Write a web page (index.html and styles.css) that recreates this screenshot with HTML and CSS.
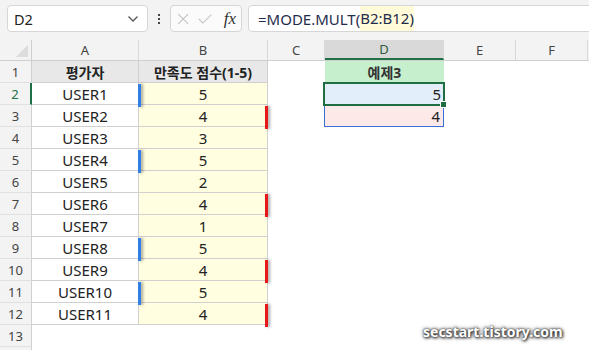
FILE: index.html
```html
<!DOCTYPE html>
<html lang="ko">

<head>
    <meta charset="UTF-8">
    <meta name="viewport" content="width=device-width, initial-scale=1.0">
    <title>MODE.MULT</title>
    <link rel="stylesheet" href="styles.css">
</head>

<body>
    <div class="app">
        <div class="toolbar">
            <div class="namebox">
                <span>D2</span>
                <svg class="namebox__arrow" width="12" height="8" viewBox="0 0 12 8">
                    <path d="M1.5 1.5 L6 6 L10.5 1.5" fill="none" stroke="#555" stroke-width="1.3" />
                </svg>
            </div>
            <div class="toolbar__dots">
                <span></span><span></span><span></span>
            </div>
            <div class="fxbox">
                <svg width="14" height="14" viewBox="0 0 14 14">
                    <path d="M1.5 1.5 L12.5 12.5 M12.5 1.5 L1.5 12.5" stroke="#c2c2c2" stroke-width="1.2" />
                </svg>
                <svg width="16" height="14" viewBox="0 0 16 14">
                    <path d="M1 7 L5.5 11.5 L15 2" fill="none" stroke="#c2c2c2" stroke-width="1.2" />
                </svg>
                <span class="fxbox__fx">fx</span>
            </div>
            <div class="formula">
                <span>=MODE.MULT(</span><span class="formula__ref">B2:B12)</span>
            </div>
        </div>

        <div class="sheet">
            <div class="row row--head">
                <div class="corner"><span class="corner__tri"></span></div>
                <div class="colhead">A</div>
                <div class="colhead">B</div>
                <div class="colhead">C</div>
                <div class="colhead colhead--active">D</div>
                <div class="colhead">E</div>
                <div class="colhead">F</div>
                <div class="colhead colhead--last"></div>
            </div>

            <div class="row">
                <div class="rowhead">1</div>
                <div class="cell cell--title">평가자</div>
                <div class="cell cell--title">만족도 점수(1-5)</div>
                <div class="blank"></div>
                <div class="dcell dcell--title">예제3</div>
                <div class="blank"></div><div class="blank"></div><div class="blank"></div>
            </div>

            <div class="row">
                <div class="rowhead rowhead--active">2</div>
                <div class="cell">USER1</div>
                <div class="cell cell--score"><span class="mark mark--blue"></span>5</div>
                <div class="blank"></div>
                <div class="dcell dcell--sel">5<span class="handle"></span></div>
                <div class="blank"></div><div class="blank"></div><div class="blank"></div>
            </div>

            <div class="row">
                <div class="rowhead">3</div>
                <div class="cell">USER2</div>
                <div class="cell cell--score">4<span class="mark mark--red"></span></div>
                <div class="blank"></div>
                <div class="dcell dcell--spill">4</div>
                <div class="blank"></div><div class="blank"></div><div class="blank"></div>
            </div>

            <div class="row">
                <div class="rowhead">4</div>
                <div class="cell">USER3</div>
                <div class="cell cell--score">3</div>
            </div>

            <div class="row">
                <div class="rowhead">5</div>
                <div class="cell">USER4</div>
                <div class="cell cell--score"><span class="mark mark--blue"></span>5</div>
            </div>

            <div class="row">
                <div class="rowhead">6</div>
                <div class="cell">USER5</div>
                <div class="cell cell--score">2</div>
            </div>

            <div class="row">
                <div class="rowhead">7</div>
                <div class="cell">USER6</div>
                <div class="cell cell--score">4<span class="mark mark--red"></span></div>
            </div>

            <div class="row">
                <div class="rowhead">8</div>
                <div class="cell">USER7</div>
                <div class="cell cell--score">1</div>
            </div>

            <div class="row">
                <div class="rowhead">9</div>
                <div class="cell">USER8</div>
                <div class="cell cell--score"><span class="mark mark--blue"></span>5</div>
            </div>

            <div class="row">
                <div class="rowhead">10</div>
                <div class="cell">USER9</div>
                <div class="cell cell--score">4<span class="mark mark--red"></span></div>
            </div>

            <div class="row">
                <div class="rowhead">11</div>
                <div class="cell">USER10</div>
                <div class="cell cell--score"><span class="mark mark--blue"></span>5</div>
            </div>

            <div class="row">
                <div class="rowhead">12</div>
                <div class="cell">USER11</div>
                <div class="cell cell--score">4<span class="mark mark--red"></span></div>
            </div>

            <div class="row">
                <div class="rowhead">13</div>
            </div>

            <div class="row">
                <div class="rowhead"></div>
            </div>
        </div>

        <div class="watermark">secstart.tistory.com</div>
    </div>
</body>

</html>
```

FILE: styles.css
```css
body {
    margin: 0;
    background-color: #fff;
    font-family: 'Noto Sans', 'Noto Sans CJK KR', sans-serif;
    color: #222;
}

.app {
    position: relative;
    width: 589px;
    height: 350px;
    overflow: hidden;
}

/* formula bar */

.toolbar {
    height: 40px;
    box-sizing: border-box;
    background-color: #f3f3f3;
    padding: 5px 0 0 7px;
    display: flex;
    align-items: flex-start;
}

.namebox,
.fxbox,
.formula {
    height: 27px;
    box-sizing: border-box;
    background-color: #fff;
    border: 1px solid #d6d6d6;
    border-radius: 4px;
    display: flex;
    align-items: center;
}

.namebox {
    width: 141px;
    padding: 0 8px 0 6px;
    justify-content: space-between;
    font-size: 14.5px;
    color: #222;
}

.toolbar__dots {
    width: 22px;
    height: 27px;
    display: flex;
    flex-direction: column;
    align-items: center;
    justify-content: center;
    gap: 2px;
}

.toolbar__dots span {
    width: 2px;
    height: 2px;
    background-color: #444;
}

.fxbox {
    width: 72px;
    padding: 0 5px 0 6px;
    gap: 9px;
    background-color: #fbfbfb;
}

.fxbox__fx {
    font-family: 'Liberation Serif', serif;
    font-style: italic;
    font-size: 17px;
    color: #333;
    margin-left: 2px;
}

.formula {
    flex: 1;
    margin-left: 6px;
    margin-right: -4px;
    padding-left: 9px;
    font-size: 15px;
    color: #1f2d4d;
    overflow: hidden;
}

.formula__ref {
    background-color: #fffbd9;
    line-height: 25px;
}

/* grid */

.row {
    display: grid;
    grid-template-columns: 32px 107px 129px 57px 119px 72px 72px 1fr;
    height: 22px;
}

.row--head {
    height: 21px;
    background-color: #f3f3f3;
    border-bottom: 1px solid #cfcfcf;
    box-sizing: border-box;
}

.corner {
    position: relative;
    border-right: 1px solid #cfcfcf;
}

.corner__tri {
    position: absolute;
    right: 3px;
    bottom: 3px;
    width: 0;
    height: 0;
    border-left: 12px solid transparent;
    border-bottom: 12px solid #dcdcdc;
}

.colhead {
    border-right: 1px solid #d8d8d8;
    font-size: 13px;
    color: #444;
    display: flex;
    align-items: center;
    justify-content: center;
}

.colhead--active {
    background-color: #d9d9d9;
    border-bottom: 2px solid #1e7145;
    color: #2d5a3d;
}

.colhead--last {
    border-right: none;
}

.rowhead {
    background-color: #f3f3f3;
    border-right: 1px solid #cfcfcf;
    border-bottom: 1px solid #e0e0e0;
    box-sizing: border-box;
    font-size: 13px;
    color: #444;
    display: flex;
    align-items: center;
    justify-content: center;
}

.rowhead--active {
    color: #1e7145;
    border-right: 2px solid #1e7145;
}

.cell {
    position: relative;
    box-sizing: border-box;
    border-right: 1px solid #d0d0d0;
    border-bottom: 1px solid #d0d0d0;
    font-size: 15px;
    display: flex;
    align-items: center;
    justify-content: center;
}

.cell--title {
    background-color: #e8e8e8;
    font-weight: bold;
    font-size: 14px;
}

.cell--score {
    background-color: #fffee0;
}

.mark {
    position: absolute;
    top: 1px;
    width: 3px;
    height: 23px;
    box-shadow: 2px 0 3px rgba(0, 0, 0, 0.35);
    z-index: 1;
}

.mark--blue {
    left: -1px;
    background-color: #2f7fe6;
}

.mark--red {
    right: -1px;
    background-color: #e81818;
}

.dcell {
    position: relative;
    box-sizing: border-box;
    font-size: 15px;
    display: flex;
    align-items: center;
    justify-content: flex-end;
    padding-right: 3px;
}

.dcell--title {
    background-color: #c6efce;
    justify-content: center;
    font-weight: bold;
    font-size: 14px;
    color: #333;
    padding-right: 0;
}

.dcell--sel {
    background-color: #e3eefb;
    outline: 2px solid #1e6e42;
    outline-offset: -1px;
    margin-left: -1px;
    z-index: 2;
}

.dcell--spill {
    background-color: #fde9e8;
    border: 1px solid #3a6fd6;
    border-top: none;
    margin-left: -1px;
}

.handle {
    position: absolute;
    right: -3px;
    bottom: -3px;
    width: 5px;
    height: 5px;
    background-color: #1e6e42;
    border: 1px solid #fff;
}

.watermark {
    position: absolute;
    left: 423px;
    top: 322px;
    font-size: 14px;
    font-weight: bold;
    color: #fff;
    text-shadow: 0 0 2px #333, 1px 1px 3px #222, 0 0 4px #555;
}
```
